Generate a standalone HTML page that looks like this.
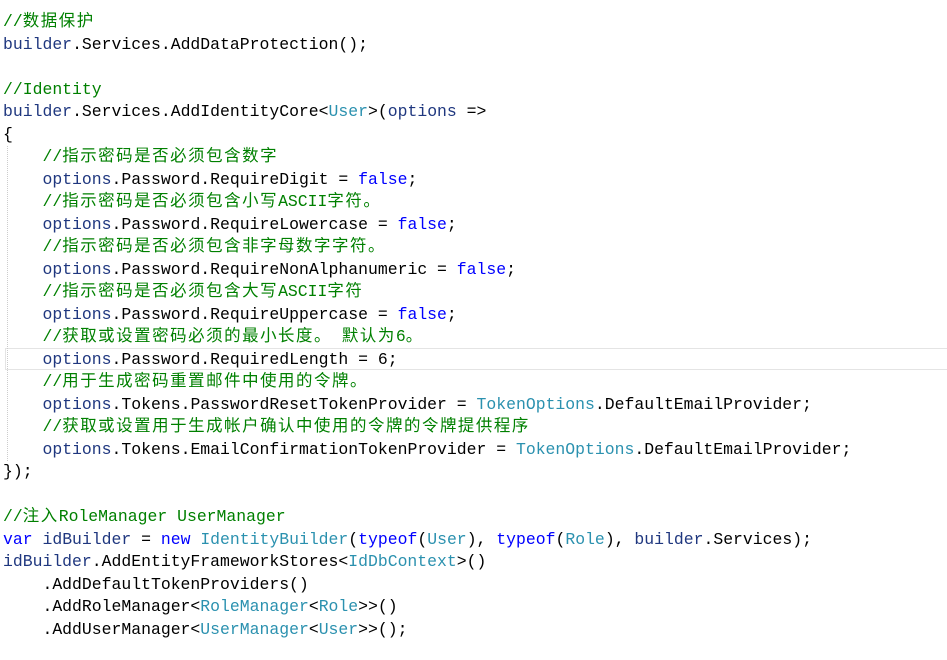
<!DOCTYPE html>
<html><head><meta charset="utf-8"><style>
html,body{margin:0;padding:0;background:#fff;width:947px;height:660px;overflow:hidden}
pre{margin:0;position:absolute;left:3px;top:11px;font-family:"Liberation Mono","Noto Sans CJK SC",monospace;font-size:16.45px;line-height:22.5px;color:#000}
.c{color:#008000}.k{color:#0000ff}.t{color:#2b91af}.v{color:#1f377f}
i{font-style:normal;letter-spacing:1.55px}
.cur{position:absolute;left:5px;top:348px;width:950px;height:22px;border:1px solid #e4e4e4;box-sizing:border-box}
.g{position:absolute;left:7px;top:146px;height:315px;border-left:1px dotted #ccc}
</style></head><body>
<div class="cur"></div><div class="g"></div>
<pre><span class="c">//<i>数据保护</i></span>
<span class="v">builder</span>.Services.AddDataProtection();

<span class="c">//Identity</span>
<span class="v">builder</span>.Services.AddIdentityCore&lt;<span class="t">User</span>&gt;(<span class="v">options</span> =&gt;
{
    <span class="c">//<i>指示密码是否必须包含数字</i></span>
    <span class="v">options</span>.Password.RequireDigit = <span class="k">false</span>;
    <span class="c">//<i>指示密码是否必须包含小写</i>ASCII<i>字符。</i></span>
    <span class="v">options</span>.Password.RequireLowercase = <span class="k">false</span>;
    <span class="c">//<i>指示密码是否必须包含非字母数字字符。</i></span>
    <span class="v">options</span>.Password.RequireNonAlphanumeric = <span class="k">false</span>;
    <span class="c">//<i>指示密码是否必须包含大写</i>ASCII<i>字符</i></span>
    <span class="v">options</span>.Password.RequireUppercase = <span class="k">false</span>;
    <span class="c">//<i>获取或设置密码必须的最小长度。</i> <i>默认为</i>6<i>。</i></span>
    <span class="v">options</span>.Password.RequiredLength = 6;
    <span class="c">//<i>用于生成密码重置邮件中使用的令牌。</i></span>
    <span class="v">options</span>.Tokens.PasswordResetTokenProvider = <span class="t">TokenOptions</span>.DefaultEmailProvider;
    <span class="c">//<i>获取或设置用于生成帐户确认中使用的令牌的令牌提供程序</i></span>
    <span class="v">options</span>.Tokens.EmailConfirmationTokenProvider = <span class="t">TokenOptions</span>.DefaultEmailProvider;
});

<span class="c">//<i>注入</i>RoleManager UserManager</span>
<span class="k">var</span> <span class="v">idBuilder</span> = <span class="k">new</span> <span class="t">IdentityBuilder</span>(<span class="k">typeof</span>(<span class="t">User</span>), <span class="k">typeof</span>(<span class="t">Role</span>), <span class="v">builder</span>.Services);
<span class="v">idBuilder</span>.AddEntityFrameworkStores&lt;<span class="t">IdDbContext</span>&gt;()
    .AddDefaultTokenProviders()
    .AddRoleManager&lt;<span class="t">RoleManager</span>&lt;<span class="t">Role</span>&gt;&gt;()
    .AddUserManager&lt;<span class="t">UserManager</span>&lt;<span class="t">User</span>&gt;&gt;();</pre>
</body></html>
